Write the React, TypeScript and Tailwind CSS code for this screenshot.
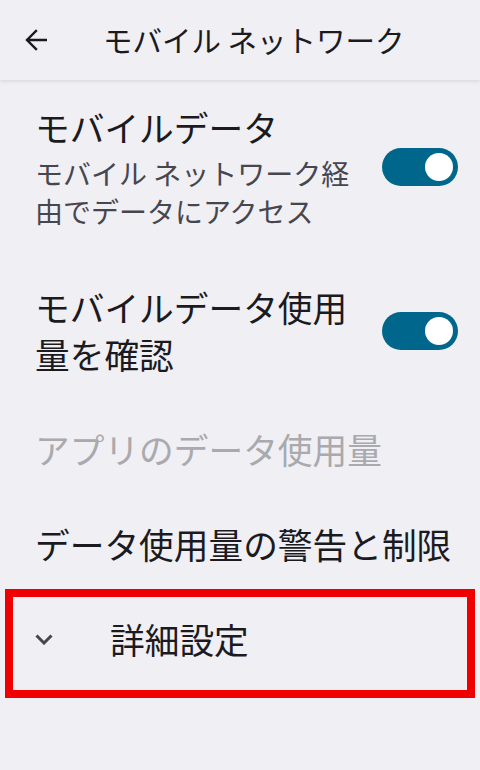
import React from "react";

function Toggle() {
  return (
    <div className="w-[76px] h-[38px] rounded-full bg-[#00668b] flex items-center justify-end pr-[5px] shrink-0">
      <div className="w-[28px] h-[28px] rounded-full bg-white" />
    </div>
  );
}

export default function App() {
  return (
    <div className="relative w-[480px] h-[770px] overflow-hidden bg-[#efeff4] font-['Noto_Sans_CJK_JP','Noto_Sans',sans-serif] text-[#1b1b1f]">
      <header className="relative z-10 h-[80px] flex items-center bg-[#efeff4] shadow-[0_2px_3px_rgba(0,0,0,0.08)]">
        <div className="w-[103px] pl-[25px] flex items-center">
          <svg width="22" height="22" viewBox="0 0 22 22" fill="none">
            <path d="M21 11H2.5M11 2L2 11l9 9" stroke="#1b1b1f" strokeWidth="2.4" strokeLinecap="square" />
          </svg>
        </div>
        <span className="text-[29.5px] leading-none">モバイル ネットワーク</span>
      </header>

      <div className="flex items-center pl-[35px] pr-[22px] pt-[24px] pb-[30px]">
        <div className="w-[325px] mr-auto">
          <div className="text-[34.7px] leading-[47px]">モバイルデータ</div>
          <div className="mt-[3px] text-[28px] leading-[38px] text-[#46464f]">モバイル ネットワーク経由でデータにアクセス</div>
        </div>
        <Toggle />
      </div>

      <div className="flex items-center pl-[35px] pr-[22px] py-[24px]">
        <div className="w-[325px] mr-auto text-[34.7px] leading-[47px]">モバイルデータ使用量を確認</div>
        <Toggle />
      </div>

      <div className="h-[95px] flex items-center pl-[35px] text-[34.7px] leading-[47px] text-[#a9a9ae]">
        アプリのデータ使用量
      </div>

      <div className="h-[95px] flex items-center pl-[35px] text-[34.7px] leading-[47px]">
        データ使用量の警告と制限
      </div>

      <div className="h-[95px] flex items-center">
        <div className="w-[110px] pl-[35px] flex items-center">
          <svg width="18" height="11" viewBox="0 0 18 11" fill="none">
            <path d="M1.5 1.5l7.5 7.5 7.5-7.5" stroke="#44474e" strokeWidth="3" />
          </svg>
        </div>
        <span className="text-[34.7px] leading-[47px]">詳細設定</span>
      </div>

      <div className="absolute left-[5px] top-[589px] w-[470px] h-[109px] border-[8px] border-[#f00000] pointer-events-none" />
    </div>
  );
}
